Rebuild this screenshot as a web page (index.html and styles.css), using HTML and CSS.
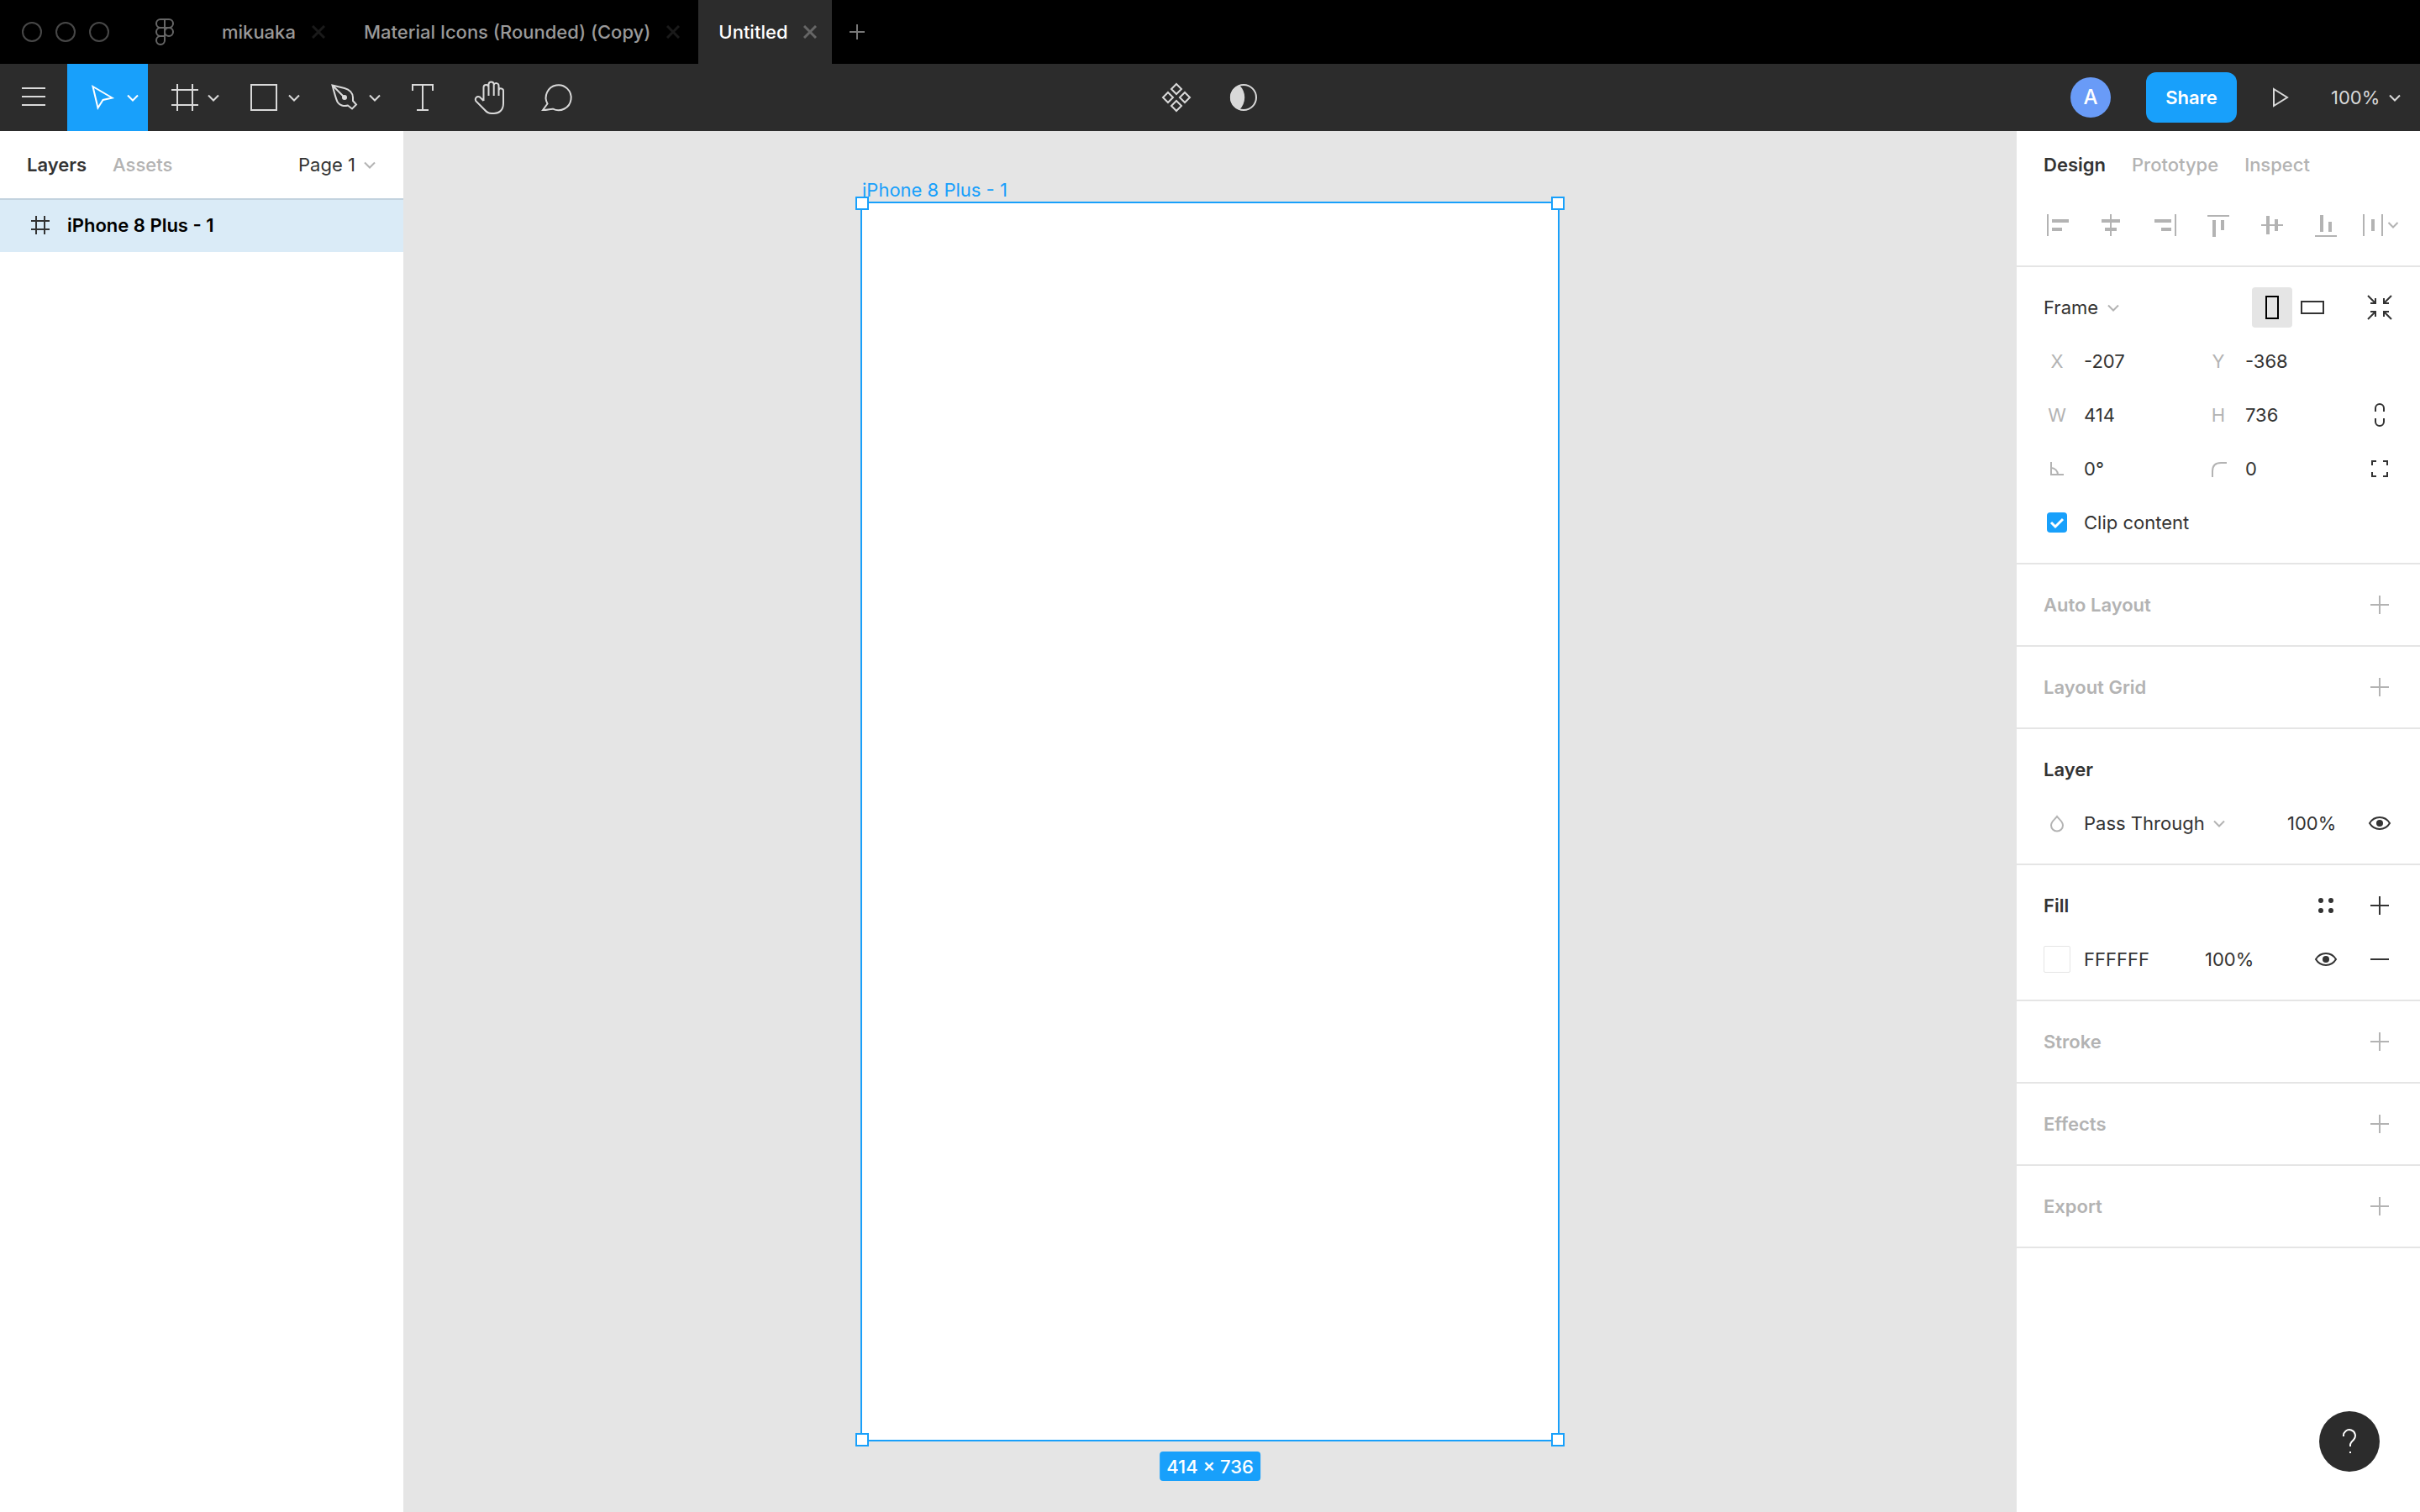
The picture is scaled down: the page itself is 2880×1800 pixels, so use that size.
FILE: index.html
```html
<!DOCTYPE html>
<html lang="en">
<head>
<meta charset="utf-8">
<title>Untitled</title>
<meta name="viewport" content="width=device-width, initial-scale=1">
<link rel="stylesheet" href="styles.css">
</head>
<body>
<svg class="sprite" aria-hidden="true">
  <symbol id="caret" viewBox="0 0 16 16"><path d="M2 5.500 8 11.500 14 5.500"/></symbol>
  <symbol id="close" viewBox="0 0 16 16"><path d="M1 1 15 15M15 1 1 15"/></symbol>
  <symbol id="plus" viewBox="0 0 32 32"><path d="M16 5V27M5 16H27"/></symbol>
  <symbol id="eye" viewBox="0 0 32 32"><path d="M4 16C7 11 11 9 16 9S25 11 28 16C25 21 21 23 16 23S7 21 4 16Z"/><circle class="solid" cx="16" cy="16" r="4"/></symbol>
</svg>

<div class="app">
  <header class="tabbar">
    <div class="lights"><i></i><i></i><i></i></div>
    <button class="home" aria-label="Home">
      <svg class="icon" width="22" height="32" viewBox="0 0 22 32"><path d="M6 1H16A5 5 0 0 1 16 11H6A5 5 0 0 1 6 1ZM11 1V26A5 5 0 1 1 6 21H11M11 11H6A5 5 0 0 0 6 21"/><circle cx="16" cy="16" r="5"/></svg>
    </button>
    <nav class="filetabs" aria-label="Files">
      <div class="filetab"><a href="#">mikuaka</a><button aria-label="Close mikuaka"><svg class="icon" width="16" height="16"><use href="#close"/></svg></button></div>
      <div class="filetab"><a href="#">Material Icons (Rounded) (Copy)</a><button aria-label="Close Material Icons"><svg class="icon" width="16" height="16"><use href="#close"/></svg></button></div>
      <div class="filetab active"><a href="#">Untitled</a><button aria-label="Close Untitled"><svg class="icon" width="16" height="16"><use href="#close"/></svg></button></div>
    </nav>
    <button class="newtab" aria-label="New file"><svg class="icon" width="18" height="18" viewBox="0 0 18 18"><path d="M9 0V18M0 9H18"/></svg></button>
  </header>

  <div class="toolbar">
    <div class="tools">
      <button class="tool" aria-label="Menu"><svg class="icon" width="40" height="40" viewBox="0 0 40 40"><path d="M6 9H34M6 19H34M6 29H34"/></svg></button>
      <button class="tool wide active" aria-label="Move"><svg class="icon" width="40" height="40" viewBox="0 0 40 40"><path d="M6.5 7 29.5 20.5 18.5 23 12.5 32.5Z"/></svg><svg class="icon" width="16" height="16"><use href="#caret"/></svg></button>
      <button class="tool wide" aria-label="Frame"><svg class="icon" width="40" height="40" viewBox="0 0 40 40"><path d="M11 4V36M29 4V36M4 11H36M4 29H36"/></svg><svg class="icon" width="16" height="16"><use href="#caret"/></svg></button>
      <button class="tool wide" aria-label="Rectangle"><svg class="icon" width="40" height="40" viewBox="0 0 40 40"><path d="M3 5H33V35H3Z"/></svg><svg class="icon" width="16" height="16"><use href="#caret"/></svg></button>
      <button class="tool wide" aria-label="Pen"><svg class="icon" width="40" height="40" viewBox="0 0 40 40"><path d="M3.500 5.500 18 9C24 10.500 28 15 28 20V24L32 28.500 27 33.500 22 29.500C17 31 12 29 10 26C8 23 7.500 20 3.500 5.500ZM3.500 5.500 17 19"/><circle class="solid" cx="18" cy="20" r="3"/></svg><svg class="icon" width="16" height="16"><use href="#caret"/></svg></button>
      <button class="tool" aria-label="Text"><svg class="icon" width="40" height="40" viewBox="0 0 40 40"><path d="M7 12V5H31V12M19 5V35M12 35H26"/></svg></button>
      <button class="tool" aria-label="Hand"><svg class="icon" width="40" height="40" viewBox="0 0 40 40"><path d="M11.500 24V8A3 3 0 0 1 17.500 8V18M17.500 8V4A3.200 3.200 0 0 1 23.700 4V18M23.700 5A3 3 0 0 1 29.500 6V18M29.500 11.500A2.800 2.800 0 0 1 35 12.500V27C35 35 30 39 24 39H21C18 39 15.500 38 13 35L2.500 24.500C0.500 21 3.500 18 7 19.500L11.500 24"/></svg></button>
      <button class="tool" aria-label="Comment"><svg class="icon" width="40" height="40" viewBox="0 0 40 40"><path d="M2 35 7.500 27.500A15 15 0 1 1 14 33.700C11 33.500 8 35 2 35Z"/></svg></button>
    </div>
    <div class="tools">
      <button class="tool" aria-label="Components"><svg class="icon" width="40" height="40" viewBox="0 0 40 40"><path d="M20 4 26 10 20 16 14 10ZM20 24 26 30 20 36 14 30ZM10 14 16 20 10 26 4 20ZM30 14 36 20 30 26 24 20Z"/></svg></button>
      <button class="tool" aria-label="Mask"><svg class="icon" width="40" height="40" viewBox="0 0 40 40"><circle cx="20" cy="20" r="15"/><path class="solid" d="M15 5.500A20 20 0 0 1 15 34.500A15 15 0 0 1 15 5.500Z"/></svg></button>
    </div>
    <div class="actions">
      <span class="avatar">A</span>
      <button class="share">Share</button>
      <button class="tool" aria-label="Present"><svg class="icon" width="32" height="32" viewBox="0 0 32 32"><path d="M8 6 24 16 8 26Z"/></svg></button>
      <label class="pick"><select aria-label="Zoom"><option>100%</option></select><svg class="icon" width="16" height="16"><use href="#caret"/></svg></label>
    </div>
  </div>

  <div class="workspace">
    <aside class="panel layers">
      <div class="paneltabs">
        <button class="current">Layers</button>
        <button>Assets</button>
        <label class="pick page"><select aria-label="Page"><option>Page 1</option></select><svg class="icon" width="16" height="16"><use href="#caret"/></svg></label>
      </div>
      <ul class="tree">
        <li><svg class="icon" width="32" height="32" viewBox="0 0 32 32"><path d="M11 5V27M21 5V27M5 11H27M5 21H27"/></svg>iPhone 8 Plus - 1</li>
      </ul>
    </aside>

    <main class="canvas">
      <div class="artboard">
        <span class="artname">iPhone 8 Plus - 1</span>
        <i class="handle tl"></i><i class="handle tr"></i><i class="handle bl"></i><i class="handle br"></i>
        <span class="size">414 × 736</span>
      </div>
    </main>

    <aside class="panel">
      <div class="paneltabs">
        <button class="current">Design</button>
        <button>Prototype</button>
        <button>Inspect</button>
      </div>
      <div class="align">
        <button aria-label="Align left"><svg class="shape" width="32" height="32" viewBox="0 0 32 32"><path d="M4 3h2v26h-2zM10 9h20v4h-20zM10 19h12v4h-12z"/></svg></button>
        <button aria-label="Align horizontal centers"><svg class="shape" width="32" height="32" viewBox="0 0 32 32"><path d="M15 3h2v26h-2zM5 9h22v4h-22zM9 19h14v4h-14z"/></svg></button>
        <button aria-label="Align right"><svg class="shape" width="32" height="32" viewBox="0 0 32 32"><path d="M28 3h2v26h-2zM4 9h20v4h-20zM12 19h12v4h-12z"/></svg></button>
        <button aria-label="Align top"><svg class="shape" width="32" height="32" viewBox="0 0 32 32"><path d="M3 4h26v2h-26zM9 10h4v20h-4zM19 10h4v12h-4z"/></svg></button>
        <button aria-label="Align vertical centers"><svg class="shape" width="32" height="32" viewBox="0 0 32 32"><path d="M3 15h26v2h-26zM9 5h4v22h-4zM19 9h4v14h-4z"/></svg></button>
        <button aria-label="Align bottom"><svg class="shape" width="32" height="32" viewBox="0 0 32 32"><path d="M3 28h26v2h-26zM9 4h4v20h-4zM19 12h4v12h-4z"/></svg></button>
        <button aria-label="Distribute"><svg class="icon" width="64" height="32" viewBox="0 0 64 32"><path d="M13 3V29M35 3V29M42.500 13 48 18.500 53.500 13"/><path class="bar" d="M24 9V23"/></svg></button>
      </div>

      <section class="section">
        <div class="row">
          <label class="pick grow"><select aria-label="Frame type"><option>Frame</option></select><svg class="icon" width="16" height="16"><use href="#caret"/></svg></label>
          <button class="orient on" aria-label="Portrait"><svg class="icon" width="32" height="32" viewBox="0 0 32 32"><path d="M9 3H23V29H9Z"/></svg></button>
          <button class="orient" aria-label="Landscape"><svg class="icon" width="32" height="32" viewBox="0 0 32 32"><path d="M3 9H29V23H3Z"/></svg></button>
          <button class="cell fit" aria-label="Resize to fit"><svg class="icon" width="32" height="32" viewBox="0 0 32 32"><path d="M2 2 10.500 10.500M5 11H11V5M30 2 21.500 10.500M27 11H21V5M2 30 10.500 21.500M5 21H11V27M30 30 21.500 21.500M27 21H21V27"/></svg></button>
        </div>
        <div class="fields">
          <label for="x">X</label><input id="x" value="-207">
          <label for="y">Y</label><input id="y" value="-368"><span></span>
          <label for="w">W</label><input id="w" value="414">
          <label for="h">H</label><input id="h" value="736">
          <button aria-label="Constrain proportions"><svg class="icon" width="32" height="32" viewBox="0 0 32 32"><path d="M11 12V8A5 5 0 0 1 21 8V12M11 20V24A5 5 0 0 0 21 24V20"/></svg></button>
          <label for="rot" aria-label="Rotation"><svg class="icon" width="32" height="32" viewBox="0 0 32 32"><path d="M9 8V23H24M9 15A8 8 0 0 1 17 23"/></svg></label><input id="rot" value="0°">
          <label for="rad" aria-label="Corner radius"><svg class="icon" width="32" height="32" viewBox="0 0 32 32"><path d="M9 26V19C9 12 12 9 19 9H26"/></svg></label><input id="rad" value="0">
          <button aria-label="Independent corners"><svg class="icon" width="32" height="32" viewBox="0 0 32 32"><path d="M7 12V7H12M20 7H25V12M25 20V25H20M12 25H7V20"/></svg></button>
        </div>
        <div class="clip"><input type="checkbox" id="clip" checked><label for="clip">Clip content</label></div>
      </section>

      <section class="section muted"><div class="row"><h2>Auto Layout</h2><button class="cell" aria-label="Add auto layout"><svg class="icon" width="32" height="32"><use href="#plus"/></svg></button></div></section>
      <section class="section muted"><div class="row"><h2>Layout Grid</h2><button class="cell" aria-label="Add layout grid"><svg class="icon" width="32" height="32"><use href="#plus"/></svg></button></div></section>

      <section class="section">
        <div class="row"><h2>Layer</h2></div>
        <div class="blend">
          <svg class="icon" width="32" height="32" viewBox="0 0 32 32"><path d="M16 8C18 11 23 14 23 18.500A7 7 0 0 1 9 18.500C9 14 14 11 16 8Z"/></svg>
          <label class="pick"><select aria-label="Blend mode"><option>Pass Through</option></select><svg class="icon" width="16" height="16"><use href="#caret"/></svg></label>
          <input aria-label="Layer opacity" value="100%">
          <button aria-label="Toggle layer"><svg class="icon" width="32" height="32"><use href="#eye"/></svg></button>
        </div>
      </section>

      <section class="section">
        <div class="row"><h2>Fill</h2>
          <button class="cell" aria-label="Styles"><svg class="shape" width="32" height="32" viewBox="0 0 32 32"><circle cx="10" cy="10" r="3"/><circle cx="22" cy="10" r="3"/><circle cx="10" cy="22" r="3"/><circle cx="22" cy="22" r="3"/></svg></button>
          <button class="cell" aria-label="Add fill"><svg class="icon" width="32" height="32"><use href="#plus"/></svg></button>
        </div>
        <div class="paint">
          <button class="swatch" aria-label="Fill color"></button>
          <input aria-label="Hex color" value="FFFFFF">
          <input aria-label="Fill opacity" value="100%">
          <button aria-label="Toggle fill"><svg class="icon" width="32" height="32"><use href="#eye"/></svg></button>
          <button aria-label="Remove fill"><svg class="icon" width="32" height="32" viewBox="0 0 32 32"><path d="M5 16H27"/></svg></button>
        </div>
      </section>

      <section class="section muted"><div class="row"><h2>Stroke</h2><button class="cell" aria-label="Add stroke"><svg class="icon" width="32" height="32"><use href="#plus"/></svg></button></div></section>
      <section class="section muted"><div class="row"><h2>Effects</h2><button class="cell" aria-label="Add effect"><svg class="icon" width="32" height="32"><use href="#plus"/></svg></button></div></section>
      <section class="section muted"><div class="row"><h2>Export</h2><button class="cell" aria-label="Add export"><svg class="icon" width="32" height="32"><use href="#plus"/></svg></button></div></section>
    </aside>
  </div>
  <button class="help" aria-label="Help"><svg class="icon" width="32" height="32" viewBox="0 0 32 32"><path d="M9 10A7 7 0 1 1 21 14C19 16 17 17.500 17 20V22M17 28V30"/></svg></button>
</div>
</body>
</html>
```

FILE: styles.css
```css
:root {
  --blue: #18a0fb;
  --ink: #333;
  --muted: #b3b3b3;
  --line: #e5e5e5;
  --chrome: #2c2c2c;
}

* { box-sizing: border-box; }

body {
  margin: 0;
  font: 400 22px/32px Inter, "Liberation Sans", sans-serif;
  color: var(--ink);
  background: #fff;
}

button, input, select {
  margin: 0;
  padding: 0;
  border: 0;
  background: none;
  font: inherit;
  color: inherit;
  appearance: none;
}

button {
  display: flex;
  align-items: center;
  justify-content: center;
}

input { min-width: 0; width: 100%; height: 32px; }
h2 { margin: 0; font-size: 22px; font-weight: 600; line-height: 32px; }
svg { display: block; flex: none; }

.sprite { position: absolute; width: 0; height: 0; }
.icon { fill: none; stroke: currentColor; stroke-width: 2; }
.shape, .solid { fill: currentColor; }
.solid { stroke: none; }
.bar { stroke-width: 4; }

.app {
  position: relative;
  display: flex;
  flex-direction: column;
  min-height: 100vh;
}

/* File tabs */
.tabbar { display: flex; height: 76px; background: #000; }
.lights { display: flex; align-items: center; gap: 16px; width: 152px; padding-left: 26px; }
.lights i { width: 24px; height: 24px; border: 2px solid #484848; border-radius: 50%; }
.home { width: 88px; color: #666; }
.filetabs { display: flex; font-weight: 500; }
.filetab {
  display: flex;
  align-items: center;
  gap: 19px;
  padding: 0 22px 0 24px;
  color: #999;
}
.filetab a { color: inherit; text-decoration: none; white-space: nowrap; }
.filetab button { color: #1a1a1a; }
.filetab .icon { stroke-width: 3; }
.filetab.active { padding-right: 18px; background: var(--chrome); color: #fff; }
.filetab.active button { color: #666; }
.newtab { width: 60px; color: #777; }

/* Toolbar */
.toolbar {
  display: grid;
  grid-template-columns: 1fr auto 1fr;
  height: 80px;
  background: var(--chrome);
  color: #d9d9d9;
}
.tools { display: flex; }
.tool { width: 80px; height: 80px; }
.tool.wide { width: 96px; gap: 6px; padding-left: 14px; }
.tool.active { background: var(--blue); color: #fff; }
.actions { display: flex; align-items: center; justify-content: flex-end; padding-right: 22px; }
.avatar {
  width: 48px;
  height: 48px;
  margin-right: 42px;
  border-radius: 50%;
  background: #699bf7;
  color: #fff;
  font-size: 24px;
  font-weight: 500;
  line-height: 48px;
  text-align: center;
}
.share {
  width: 108px;
  height: 60px;
  margin-right: 12px;
  border-radius: 12px;
  background: var(--blue);
  color: #fff;
  font-weight: 600;
}
.actions .pick { margin-left: 20px; }

.pick { display: flex; align-items: center; gap: 9px; }
.pick .icon { color: var(--muted); }
.actions .pick .icon { color: inherit; }

/* Panels */
.workspace { display: flex; flex: 1; }
.panel { flex: none; width: 480px; background: #fff; }
.paneltabs {
  display: flex;
  align-items: center;
  gap: 31px;
  height: 80px;
  padding: 0 32px;
}
.paneltabs button { color: var(--muted); font-weight: 500; }
.paneltabs .current { color: var(--ink); font-weight: 600; }
.page { margin-left: auto; }

.tree { margin: 0; padding: 0; list-style: none; }
.tree li {
  display: flex;
  align-items: center;
  gap: 16px;
  height: 64px;
  padding-left: 32px;
  background: #daebf7;
  box-shadow: inset 0 2px #c3d3df;
  color: #000;
  font-weight: 600;
}
.tree .icon { color: var(--ink); }

/* Canvas */
.canvas {
  display: flex;
  align-items: center;
  justify-content: center;
  flex: 1;
  min-width: 0;
  background: var(--line);
}
.artboard {
  position: relative;
  flex: none;
  width: 832px;
  height: 1476px;
  border: 2px solid var(--blue);
  background: #fff;
}
.artname { position: absolute; top: -32px; left: 0; color: var(--blue); }
.handle { position: absolute; width: 16px; height: 16px; border: 2px solid var(--blue); background: #fff; }
.tl { top: -8px; left: -8px; }
.tr { top: -8px; right: -8px; }
.bl { bottom: -8px; left: -8px; }
.br { bottom: -8px; right: -8px; }
.size {
  position: absolute;
  top: 100%;
  left: 50%;
  margin-top: 14px;
  padding: 2px 8px 1px;
  border-radius: 4px;
  background: var(--blue);
  color: #fff;
  font-weight: 500;
  white-space: nowrap;
  transform: translateX(-50%);
}

/* Inspector */
.align { display: flex; padding: 0 16px 16px; color: var(--muted); }
.align button { flex: 1; height: 64px; }
.section { padding: 16px; border-top: 2px solid var(--line); }
.section:last-child { border-bottom: 2px solid var(--line); }
.muted { color: var(--muted); }
.row { display: flex; align-items: center; height: 64px; padding-left: 16px; }
.row h2, .grow { flex: 1; }
.cell { width: 64px; height: 64px; }
.fit { margin-left: 24px; }
.orient { width: 48px; height: 48px; border-radius: 4px; }
.orient.on { background: var(--line); color: #000; }

.fields {
  display: grid;
  grid-template-columns: 64px 1fr 64px 1fr 64px;
  grid-auto-rows: 64px;
  align-items: center;
}
.fields label { display: flex; justify-content: center; color: var(--muted); }

.clip { display: flex; align-items: center; gap: 20px; height: 64px; padding-left: 20px; }
.clip input {
  flex: none;
  width: 24px;
  height: 24px;
  border-radius: 4px;
  background: var(--blue);
}
.clip input:checked {
  background: var(--blue) url("data:image/svg+xml,%3Csvg xmlns='http://www.w3.org/2000/svg' viewBox='0 0 24 24'%3E%3Cpath d='M5 12l5 5 9-9' fill='none' stroke='white' stroke-width='3'/%3E%3C/svg%3E");
}

.blend {
  display: grid;
  grid-template-columns: 32px 1fr 78px 64px;
  align-items: center;
  height: 64px;
  padding-left: 16px;
}
.blend > .icon { color: var(--muted); }
.blend .pick { padding-left: 16px; }

.paint {
  display: grid;
  grid-template-columns: 64px 144px 1fr 64px 64px;
  align-items: center;
  height: 64px;
}
.swatch {
  justify-self: center;
  width: 32px;
  height: 32px;
  border: 1px solid var(--line);
  border-radius: 2px;
  background: #fff;
}

.help {
  position: absolute;
  right: 48px;
  bottom: 48px;
  width: 72px;
  height: 72px;
  border-radius: 50%;
  background: var(--chrome);
  color: #fff;
}
```
